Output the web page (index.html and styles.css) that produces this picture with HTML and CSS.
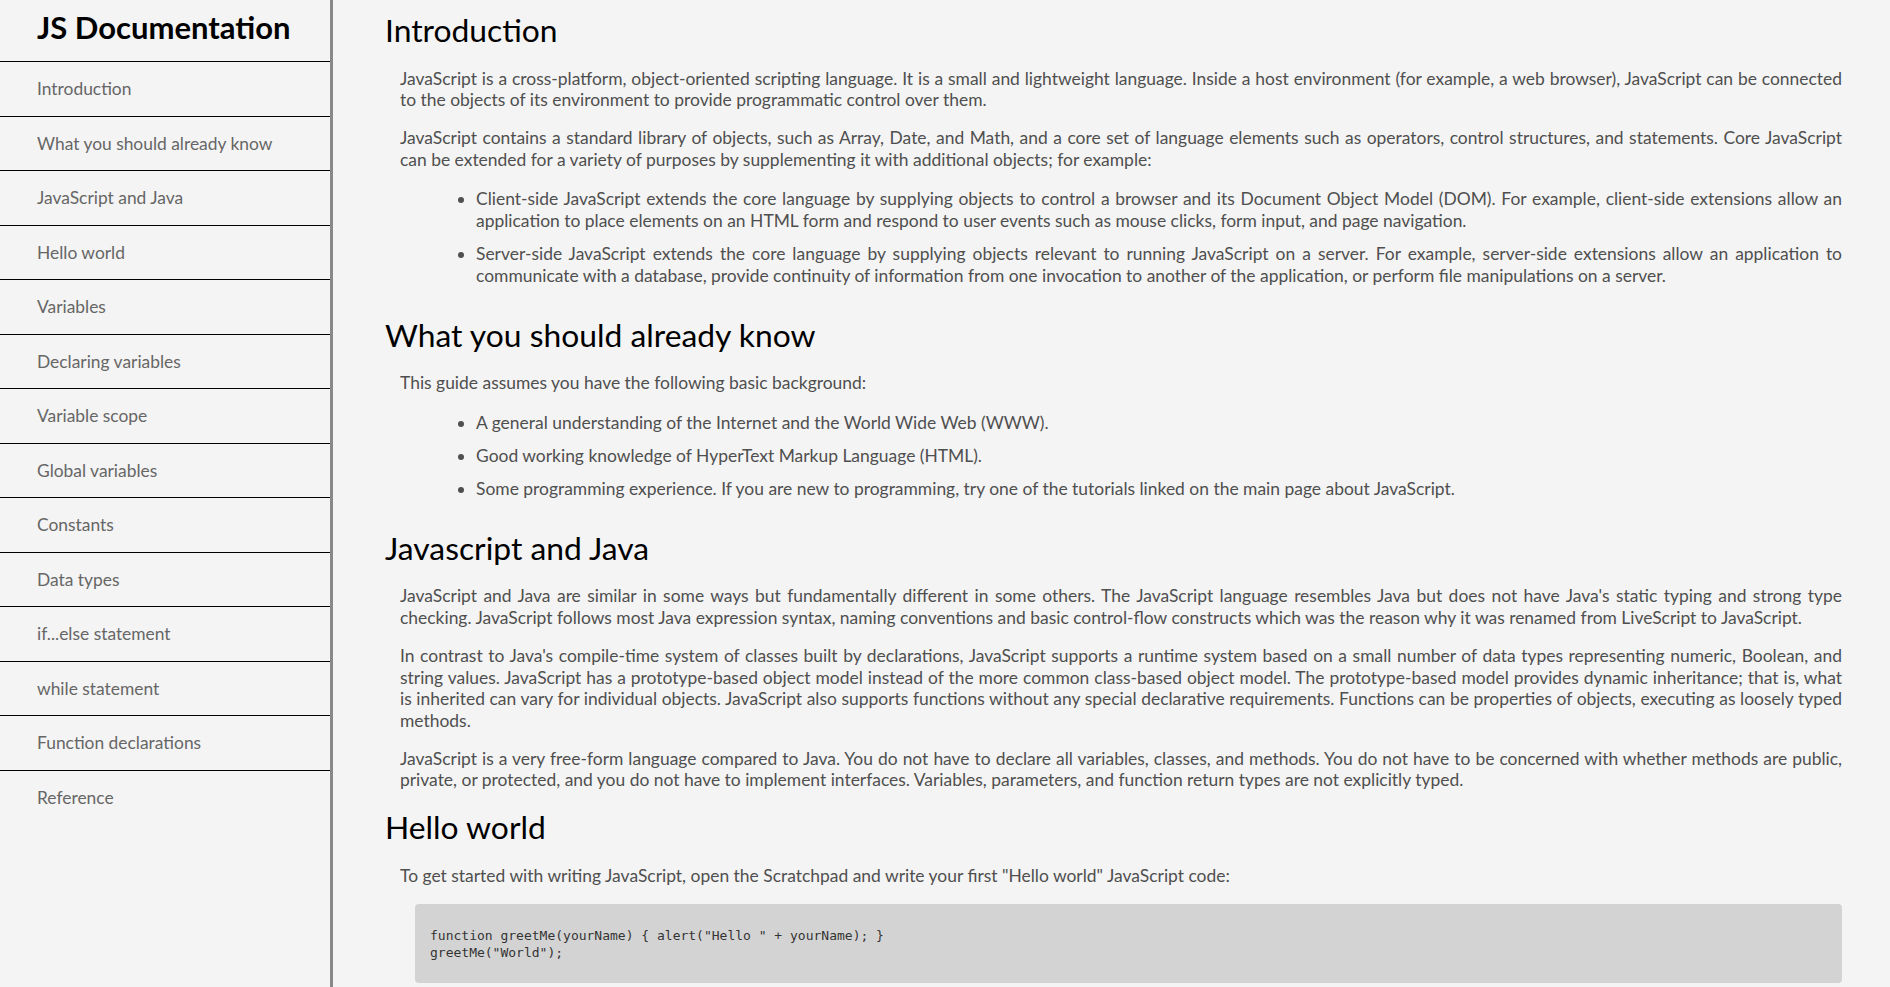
FILE: index.html
```html
<!DOCTYPE html>
<html lang="en">
<head>
<meta charset="utf-8">
<title>JS Documentation</title>
<link rel="stylesheet" href="styles.css">
</head>
<body>
<nav class="navbar" id="navbar">
  <header class="nav-header">JS Documentation</header>
  <ul class="nav-list">
    <li><a class="nav-link" href="#Introduction">Introduction</a></li>
    <li><a class="nav-link" href="#What_you_should_already_know">What you should already know</a></li>
    <li><a class="nav-link" href="#JavaScript_and_Java">JavaScript and Java</a></li>
    <li><a class="nav-link" href="#Hello_world">Hello world</a></li>
    <li><a class="nav-link" href="#Variables">Variables</a></li>
    <li><a class="nav-link" href="#Declaring_variables">Declaring variables</a></li>
    <li><a class="nav-link" href="#Variable_scope">Variable scope</a></li>
    <li><a class="nav-link" href="#Global_variables">Global variables</a></li>
    <li><a class="nav-link" href="#Constants">Constants</a></li>
    <li><a class="nav-link" href="#Data_types">Data types</a></li>
    <li><a class="nav-link" href="#if...else_statement">if...else statement</a></li>
    <li><a class="nav-link" href="#while_statement">while statement</a></li>
    <li><a class="nav-link" href="#Function_declarations">Function declarations</a></li>
    <li><a class="nav-link" href="#Reference">Reference</a></li>
  </ul>
</nav>
<main class="main-doc" id="main-doc">
  <section class="main-section" id="Introduction">
    <header class="section-title">Introduction</header>
    <article>
      <p>JavaScript is a cross-platform, object-oriented scripting language. It is a small and lightweight language. Inside a host environment (for example, a web browser), JavaScript can be connected to the objects of its environment to provide programmatic control over them.</p>
      <p>JavaScript contains a standard library of objects, such as Array, Date, and Math, and a core set of language elements such as operators, control structures, and statements. Core JavaScript can be extended for a variety of purposes by supplementing it with additional objects; for example:</p>
      <ul>
        <li>Client-side JavaScript extends the core language by supplying objects to control a browser and its Document Object Model (DOM). For example, client-side extensions allow an application to place elements on an HTML form and respond to user events such as mouse clicks, form input, and page navigation.</li>
        <li>Server-side JavaScript extends the core language by supplying objects relevant to running JavaScript on a server. For example, server-side extensions allow an application to communicate with a database, provide continuity of information from one invocation to another of the application, or perform file manipulations on a server.</li>
      </ul>
    </article>
  </section>
  <section class="main-section" id="What_you_should_already_know">
    <header class="section-title">What you should already know</header>
    <article>
      <p>This guide assumes you have the following basic background:</p>
      <ul>
        <li>A general understanding of the Internet and the World Wide Web (WWW).</li>
        <li>Good working knowledge of HyperText Markup Language (HTML).</li>
        <li>Some programming experience. If you are new to programming, try one of the tutorials linked on the main page about JavaScript.</li>
      </ul>
    </article>
  </section>
  <section class="main-section" id="JavaScript_and_Java">
    <header class="section-title">Javascript and Java</header>
    <article>
      <p>JavaScript and Java are similar in some ways but fundamentally different in some others. The JavaScript language resembles Java but does not have Java's static typing and strong type checking. JavaScript follows most Java expression syntax, naming conventions and basic control-flow constructs which was the reason why it was renamed from LiveScript to JavaScript.</p>
      <p>In contrast to Java's compile-time system of classes built by declarations, JavaScript supports a runtime system based on a small number of data types representing numeric, Boolean, and string values. JavaScript has a prototype-based object model instead of the more common class-based object model. The prototype-based model provides dynamic inheritance; that is, what is inherited can vary for individual objects. JavaScript also supports functions without any special declarative requirements. Functions can be properties of objects, executing as loosely typed methods.</p>
      <p>JavaScript is a very free-form language compared to Java. You do not have to declare all variables, classes, and methods. You do not have to be concerned with whether methods are public, private, or protected, and you do not have to implement interfaces. Variables, parameters, and function return types are not explicitly typed.</p>
    </article>
  </section>
  <section class="main-section" id="Hello_world">
    <header class="section-title">Hello world</header>
    <article>
      <p>To get started with writing JavaScript, open the Scratchpad and write your first "Hello world" JavaScript code:</p>
      <pre class="code"><code>function greetMe(yourName) { alert("Hello " + yourName); }
greetMe("World");</code></pre>
    </article>
  </section>
</main>
</body>
</html>
```

FILE: styles.css
```css
* { box-sizing: border-box; }
html, body { margin: 0; padding: 0; }
body {
  background: #f4f4f4;
  font-family: Lato, "Open Sans", sans-serif;
  display: flex;
  align-items: flex-start;
  min-height: 100vh;
}
.navbar {
  flex: 0 0 333px;
  width: 333px;
  min-height: 100vh;
  align-self: stretch;
  border-right: 3px solid #888;
}
.nav-header {
  height: 62px;
  padding-left: 37px;
  font-size: 31px;
  font-weight: 700;
  color: #000;
  line-height: 54px;
  border-bottom: 1px solid #000;
}
.nav-list {
  list-style: none;
  margin: 0;
  padding: 0;
}
.nav-list li {
  height: 54.5px;
  border-bottom: 1px solid #000;
}
.nav-list li:last-child { border-bottom: none; }
.nav-link {
  display: block;
  padding-left: 37px;
  line-height: 54px;
  font-size: 17.4px;
  color: #666;
  text-decoration: none;
}
.main-doc {
  flex: 1;
  padding: 10px 48px 0 52px;
  color: #4f4f4f;
}
.section-title {
  font-size: 31.8px;
  line-height: 41px;
  color: #000;
}
article p {
  margin: 16px 0 16px 15px;
  font-size: 17.45px;
  line-height: 21.7px;
  text-align: justify;
}
article p:first-child { margin-top: 16.5px; }
article ul {
  margin: 18px 0 28px 15px;
  padding-left: 76px;
  font-size: 17.45px;
  line-height: 21.7px;
  text-align: justify;
}
article ul li { margin-bottom: 11.5px; }
article ul li:last-child { margin-bottom: 0; }
.code {
  margin: 18px 0 0 30px;
  padding: 23px 15px 22px;
  background: #d3d3d3;
  border-radius: 4px;
  font-family: "DejaVu Sans Mono", monospace;
  font-size: 13px;
  line-height: 17px;
  color: #333;
}
```
